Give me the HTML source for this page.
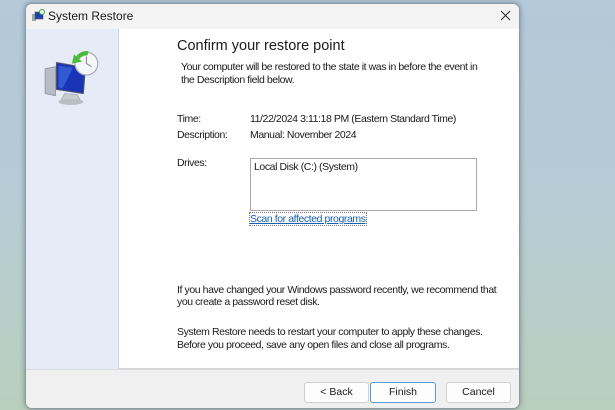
<!DOCTYPE html>
<html><head><style>
*{margin:0;padding:0;box-sizing:border-box}
body{width:615px;height:410px;overflow:hidden;background:linear-gradient(#b4c9d9 0%,#b6cbd4 50%,#b9cfbd 100%);font-family:"Liberation Sans",sans-serif;position:relative;color:#1a1a1a}
.win{position:absolute;left:25px;top:3px;width:495px;height:406px;border-radius:7px;background:#f0f0f0;overflow:hidden;box-shadow:0 0 6px rgba(0,0,0,.35);border:1px solid #8a9aa6}
.title{position:absolute;left:0;top:0;width:100%;height:25px;background:#f3f3f3}
.title span{position:absolute;left:22px;top:5px;font-size:12px}
.side{position:absolute;left:0;top:25px;width:93px;height:340px;background:#e5ecf7;border-right:1px solid #c8d3ea}
.main{position:absolute;left:93px;top:25px;width:402px;height:340px;background:#fff;border-bottom:1px solid #d5d5d5}
.foot{position:absolute;left:0;top:365px;width:100%;height:41px;background:#f0f0f0;border-top:1px solid #dcdcdc}
.t{position:absolute;font-size:10.5px;letter-spacing:-0.42px;white-space:nowrap;line-height:12px}
.btn{position:absolute;top:378px;height:21px;border:1px solid #d0d0d0;border-radius:3px;background:#fdfdfd;font-size:10.5px;text-align:center;line-height:19px}
</style></head><body>
<div class="win">
<div class="title">
<svg style="position:absolute;left:5px;top:5px" width="14" height="14" viewBox="0 0 14 14"><rect x="1" y="5" width="4" height="7" fill="#9aa"/><rect x="4" y="3" width="8" height="7" fill="#1d3fae" stroke="#556" stroke-width=".6"/><circle cx="11" cy="3" r="2.5" fill="#eee" stroke="#3a3"/></svg>
<span>System Restore</span>
<svg style="position:absolute;left:474px;top:6px" width="11" height="11" viewBox="0 0 11 11"><path d="M1 1L10 10M10 1L1 10" stroke="#333" stroke-width="1.1"/></svg>
</div>
<div class="side">
<svg style="position:absolute;left:16px;top:16px" width="62" height="62" viewBox="0 0 60 58">
<path d="M3 22L13 20L13 48L3 46Z" fill="#b8bcc4" stroke="#889" stroke-width=".7"/>
<path d="M14 16L42 21L40 46L14 42Z" fill="#1a34b8" stroke="#556" stroke-width="1"/>
<path d="M16 19L30 21L20 41L16 40Z" fill="#3d6ae0" opacity=".7"/>
<path d="M22 46L34 47L38 54L18 53Z" fill="#c9ccd2" stroke="#99a" stroke-width=".6"/>
<ellipse cx="28" cy="54" rx="12" ry="3" fill="#b9bdc4"/>
<circle cx="43" cy="17" r="11" fill="#f4f6f8" stroke="#aab" stroke-width="1.2"/>
<path d="M43 10V17L48 20" stroke="#889" stroke-width="1" fill="none"/>
<path d="M33 10Q38 4 45 5L44 9Q38 9 36 13L39 15L29 17L31 8Z" fill="#4cba3a"/>
</svg>
</div>
<div class="main">
<div class="t" style="left:58px;top:9px;font-size:14.5px;letter-spacing:0;line-height:17px">Confirm your restore point</div>
<div class="t" style="left:62px;top:32px">Your computer will be restored to the state it was in before the event in</div>
<div class="t" style="left:62px;top:45px">the Description field below.</div>
<div class="t" style="left:58px;top:84px">Time:</div>
<div class="t" style="left:131px;top:84px">11/22/2024 3:11:18 PM (Eastern Standard Time)</div>
<div class="t" style="left:58px;top:100px">Description:</div>
<div class="t" style="left:131px;top:100px">Manual: November 2024</div>
<div class="t" style="left:58px;top:128px">Drives:</div>
<div style="position:absolute;left:131px;top:129px;width:227px;height:53px;border:1px solid #a8a8a8"></div>
<div class="t" style="left:135px;top:132px">Local Disk (C:) (System)</div>
<div class="t" style="left:131px;top:184px;color:#1a5fb4;text-decoration:underline;outline:1px dotted #777">Scan for affected programs</div>
<div class="t" style="left:58px;top:255px">If you have changed your Windows password recently, we recommend that</div>
<div class="t" style="left:58px;top:267px">you create a password reset disk.</div>
<div class="t" style="left:58px;top:297px">System Restore needs to restart your computer to apply these changes.</div>
<div class="t" style="left:58px;top:310px">Before you proceed, save any open files and close all programs.</div>
</div>
<div class="foot"></div>
<div class="btn" style="left:278px;width:65px">&lt; Back</div>
<div class="btn" style="left:344px;width:66px;border:1px solid #5b9bd5">Finish</div>
<div class="btn" style="left:420px;width:65px">Cancel</div>
</div>
</body></html>
